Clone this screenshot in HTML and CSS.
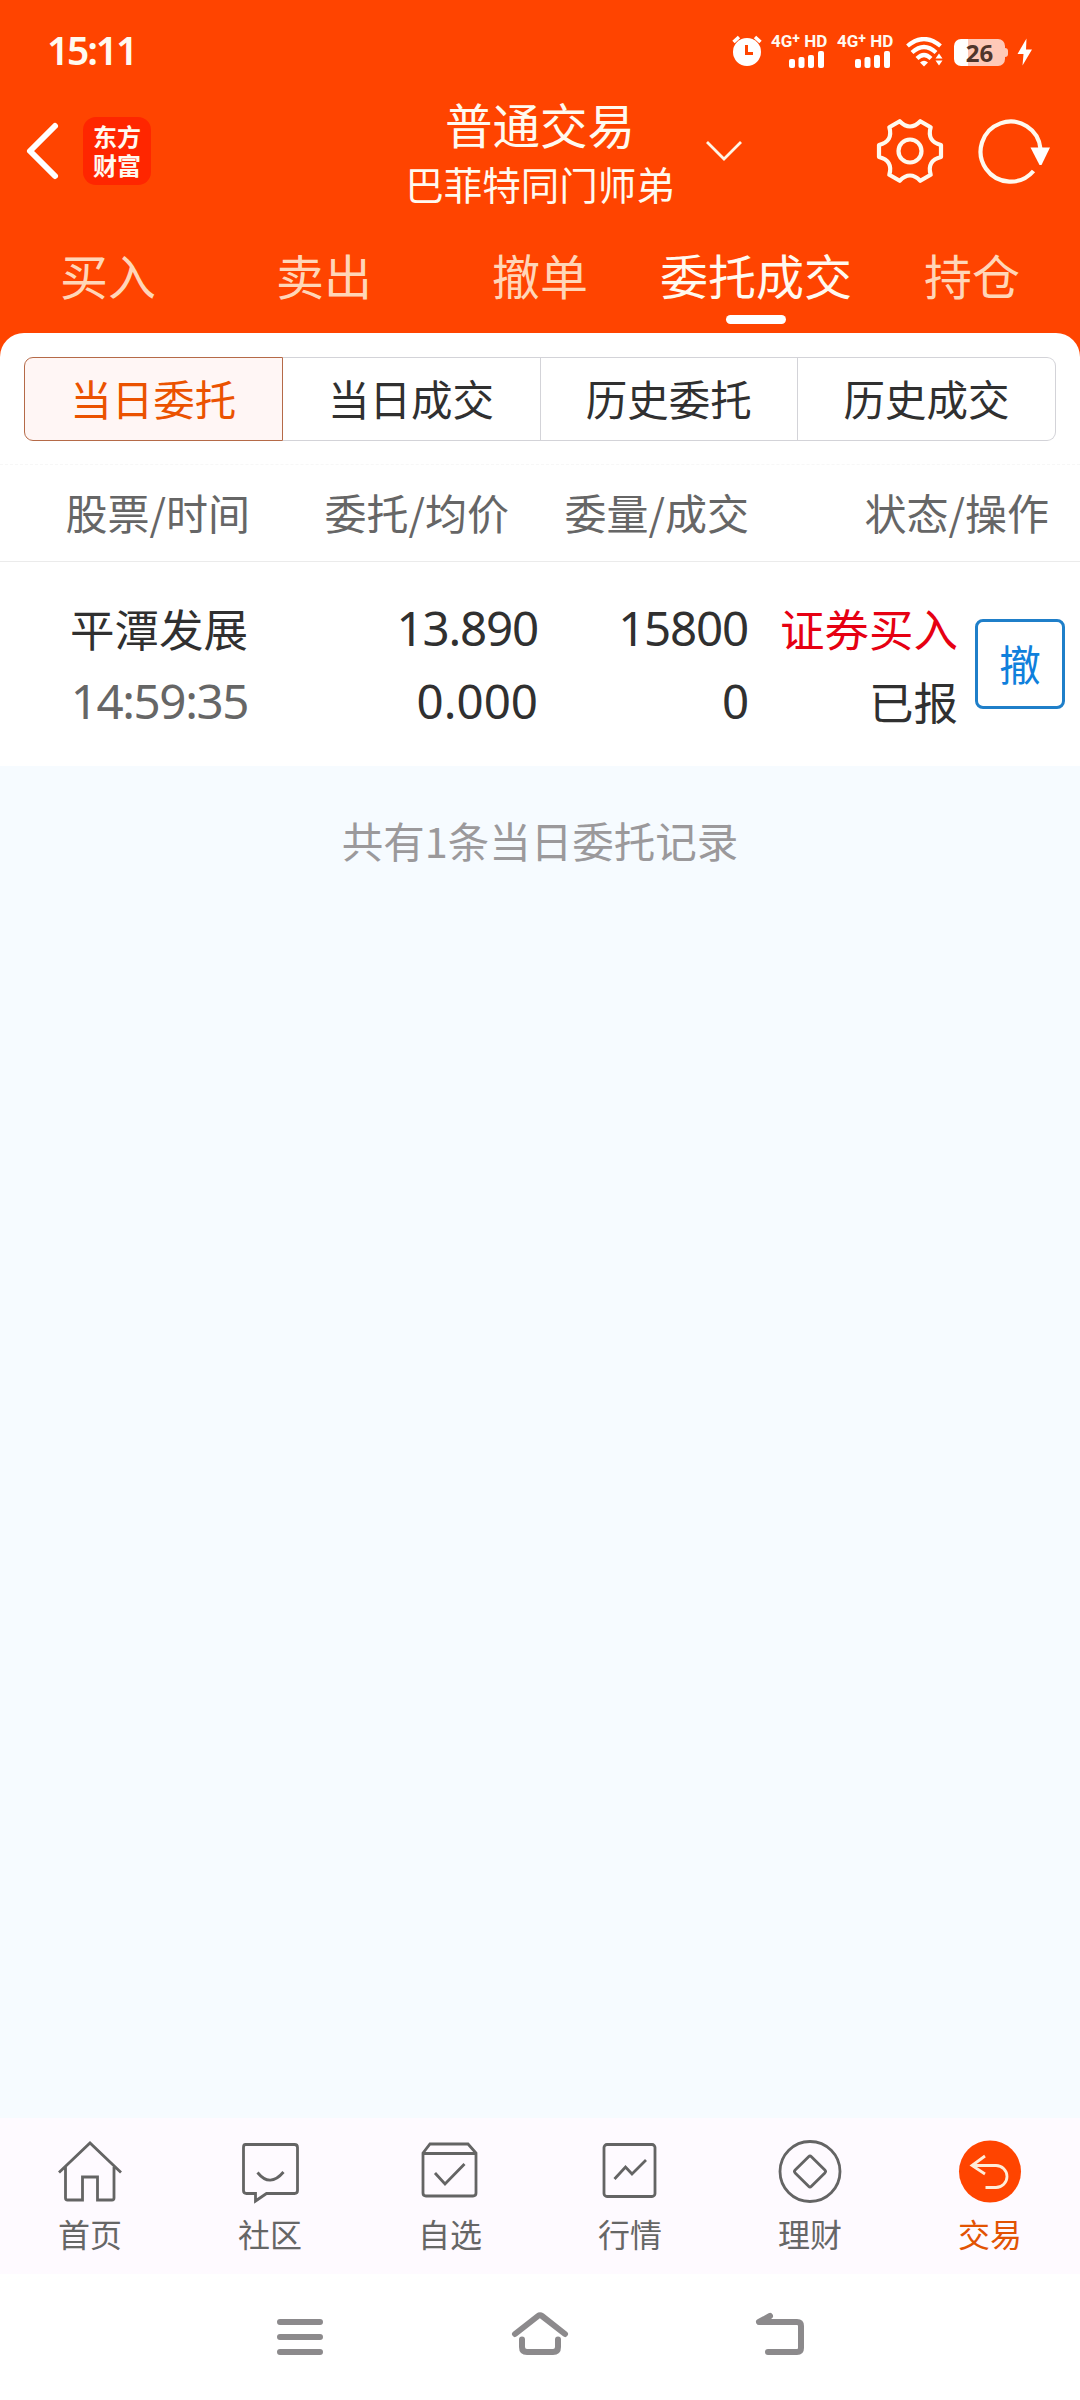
FILE: index.html
```
<!DOCTYPE html>
<html lang="zh-CN">
<head>
    <meta charset="UTF-8">
    <meta name="viewport" content="width=device-width, initial-scale=1.0">
    <title>普通交易</title>
    <link rel="stylesheet" href="styles.css">
</head>
<body>
    <header class="header">
        <div class="status-bar">
            <span class="clock">15:11</span>
            <div class="status-icons">
                <svg class="alarm" width="30" height="32" viewBox="0 0 30 32">
                    <circle cx="15" cy="18" r="14" fill="#fff"/>
                    <path d="M1.500 8L7 3M28.500 8L23 3" stroke="#fff" stroke-width="3.500"/>
                    <path d="M14.500 11V19.500H21" fill="none" stroke="#ff4400" stroke-width="3"/>
                </svg>
                <div class="signal">
                    <span>4G<sup>+</sup> HD</span>
                    <svg width="36" height="18" viewBox="0 0 36 18" fill="#fff">
                        <rect x="0" y="8" width="6" height="9" rx="2"/>
                        <rect x="9.500" y="6" width="6" height="11" rx="2"/>
                        <rect x="19" y="4" width="6" height="13" rx="2"/>
                        <rect x="29" y="0" width="6" height="17" rx="2"/>
                    </svg>
                </div>
                <div class="signal">
                    <span>4G<sup>+</sup> HD</span>
                    <svg width="36" height="18" viewBox="0 0 36 18" fill="#fff">
                        <rect x="0" y="8" width="6" height="9" rx="2"/>
                        <rect x="9.500" y="6" width="6" height="11" rx="2"/>
                        <rect x="19" y="4" width="6" height="13" rx="2"/>
                        <rect x="29" y="0" width="6" height="17" rx="2"/>
                    </svg>
                </div>
                <svg class="wifi" width="37" height="30" viewBox="0 0 37 30">
                    <g fill="none" stroke="#fff" stroke-width="4.200">
                        <path d="M1.500 9Q18 -5 34.500 9"/>
                        <path d="M6 15.500Q18 4.500 30 15.500"/>
                        <path d="M11 21.500Q18 14.500 25 21.500"/>
                    </g>
                    <path d="M14 25.500Q18 22 22 25.500L18 29.500ZM29.500 21.500L33 16.500L36.500 21.500ZM29.500 23.500L33 28.500L36.500 23.500Z" fill="#fff"/>
                </svg>
                <div class="battery">26</div>
                <svg class="bolt" width="16" height="28" viewBox="0 0 16 28">
                    <path d="M9.500 0.500L0.500 16H6.500L5.500 27.500L15 11.500H9Z" fill="#fff"/>
                </svg>
            </div>
        </div>

        <div class="title-bar">
            <div class="title-left">
                <svg width="36" height="60" viewBox="0 0 36 60">
                    <path d="M31 5L6 30L31 55" fill="none" stroke="#fff" stroke-width="6" stroke-linecap="round" stroke-linejoin="round"/>
                </svg>
                <div class="logo">东方<br>财富</div>
            </div>
            <div class="title-text">
                <h1>普通交易</h1>
                <p>巴菲特同门师弟</p>
            </div>
            <div class="title-right">
                <svg class="chevron" width="38" height="22" viewBox="0 0 38 22">
                    <path d="M2 2L19 19L36 2" fill="none" stroke="#fff6e6" stroke-width="2.800"/>
                </svg>
                <svg class="gear" width="68" height="68" viewBox="-34 -34 68 68">
                    <g fill="none" stroke="#fff9ee" stroke-width="4.200" stroke-linejoin="round">
                        <path d="M31 -6V6Q16.600 9.600 20.700 23.800L10.300 29.800Q0 19.200 -10.300 29.800L-20.700 23.800Q-16.600 9.600 -31 6V-6Q-16.600 -9.600 -20.700 -23.800L-10.300 -29.800Q0 -19.200 10.300 -29.800L20.700 -23.800Q16.600 -9.600 31 -6Z"/>
                        <circle r="11.500"/>
                    </g>
                </svg>
                <svg class="refresh" width="72" height="68" viewBox="-33 -34 72 68">
                    <path d="M29.500 -2A30 30 0 1 0 22.500 20" fill="none" stroke="#fff9ee" stroke-width="4.200"/>
                    <path d="M19.500 -3.500H39L30.500 14H28.500Z" fill="#fff"/>
                </svg>
            </div>
        </div>

        <nav class="tabs">
            <a>买入</a>
            <a>卖出</a>
            <a>撤单</a>
            <a class="active">委托成交</a>
            <a>持仓</a>
        </nav>
    </header>

    <main class="panel">
        <div class="segment">
            <button class="active">当日委托</button>
            <button>当日成交</button>
            <button>历史委托</button>
            <button>历史成交</button>
        </div>

        <div class="list-head">
            <span>股票/时间</span>
            <span>委托/均价</span>
            <span>委量/成交</span>
            <span>状态/操作</span>
        </div>

        <div class="order">
            <div class="cell name">
                <div>平潭发展</div>
                <div class="num time">14:59:35</div>
            </div>
            <div class="cell">
                <div class="num">13.890</div>
                <div class="num wide">0.000</div>
            </div>
            <div class="cell">
                <div class="num">15800</div>
                <div class="num">0</div>
            </div>
            <div class="cell">
                <div class="buy">证券买入</div>
                <div>已报</div>
            </div>
            <button class="cancel">撤</button>
        </div>
    </main>

    <p class="total">共有1条当日委托记录</p>

    <nav class="bottom-nav">
        <a>
            <svg width="68" height="68" viewBox="0 0 68 68">
                <path d="M3 31.500L34 2L65 31.500M9.500 26V57Q9.500 59 11.500 59H26.500V36H41.500V59H56Q58 59 58 57V26"/>
            </svg>
            首页
        </a>
        <a>
            <svg width="68" height="68" viewBox="0 0 68 68">
                <path d="M9.500 3.500H58.500Q61.500 3.500 61.500 6.500V49.500Q61.500 52.500 58.500 52.500H30.500L19.500 60V52.500H10.500Q7.500 52.500 7.500 49.500V6.500Q7.500 3.500 9.500 3.500Z"/>
                <path d="M21.500 31.500Q34 47 47.500 31"/>
            </svg>
            社区
        </a>
        <a>
            <svg width="68" height="68" viewBox="0 0 68 68">
                <path d="M7 12L14 3H52L60 12V52Q60 55 57 55H10Q7 55 7 52ZM7 12.500H60M19 32L29 43L48.500 23"/>
            </svg>
            自选
        </a>
        <a>
            <svg width="68" height="68" viewBox="0 0 68 68">
                <rect x="8" y="3.500" width="51" height="52" rx="3"/>
                <path d="M18.500 38L29.500 26L36 33L50 19"/>
            </svg>
            行情
        </a>
        <a>
            <svg width="68" height="68" viewBox="0 0 68 68">
                <circle cx="34" cy="30.500" r="30"/>
                <rect x="22.500" y="19" width="23" height="23" rx="2" transform="rotate(45 34 30.500)"/>
            </svg>
            理财
        </a>
        <a class="active">
            <svg width="68" height="68" viewBox="0 0 68 68">
                <circle class="disc" cx="34" cy="30.500" r="31"/>
                <path class="arrow" d="M29 15L16 24.500L29 33M16 24.500H40A11 11 0 0 1 40 46.500H29.500"/>
            </svg>
            交易
        </a>
    </nav>

    <div class="system-nav">
        <svg width="60" height="48" viewBox="0 0 60 48">
            <path d="M10 12H50M10 27H50M10 42H50"/>
        </svg>
        <svg width="60" height="48" viewBox="0 0 60 48">
            <path d="M5 24L28 6Q30 4.500 32 6L55 24M12 29.500V37Q12 42 17 42H43Q48 42 48 37V29.500"/>
        </svg>
        <svg width="60" height="48" viewBox="0 0 60 48">
            <path d="M20 6L9 12H47Q51 12 51 16V38Q51 42 47 42H18"/>
        </svg>
    </div>
</body>
</html>
```

FILE: styles.css
```
* { box-sizing: border-box; }
body {
    margin: 0;
    width: 1080px;
    height: 2400px;
    display: flex;
    flex-direction: column;
    background-color: #f6fbff;
    color: #303030;
    font-family: "Noto Sans CJK SC", sans-serif;
}
h1, p { margin: 0; font-weight: 400; }
button { font-family: inherit; color: inherit; padding: 0; }
svg { display: block; flex: none; }

/* 顶部 */
.header {
    height: 363px;
    background-color: #ff4400;
    color: #fffaf0;
}
.status-bar {
    height: 90px;
    padding: 0 47px 0 47px;
    display: flex;
    justify-content: space-between;
}
.clock {
    margin-top: 23px;
    font: 600 39px/54px "Noto Sans", sans-serif;
    letter-spacing: -2.200px;
}
.status-icons { display: flex; }
.alarm { margin: 34px 9px 0 0; }
.signal {
    width: 57px;
    height: 40px;
    margin: 34px 9px 0 0;
    display: flex;
    flex-direction: column;
    font: 700 17px/14px "Roboto", sans-serif;
    white-space: nowrap;
}
.signal sup { font-size: 14px; line-height: 0; vertical-align: 4px; }
.signal svg { margin: 3px 0 0 18px; }
.wifi { margin: 37px 11px 0 3px; }
.battery {
    position: relative;
    width: 51px;
    height: 27px;
    margin: 39px 12px 0 0;
    border-radius: 7px;
    background: linear-gradient(to right, #fff 14px, #ffc9b8 14px);
    color: #50352b;
    font: 700 24px/27px "Noto Sans", sans-serif;
    text-align: center;
}
.battery::after {
    content: "";
    position: absolute;
    left: 51px;
    top: 9px;
    width: 3px;
    height: 9px;
    border-radius: 0 3px 3px 0;
    background-color: #ffc9b8;
}
.bolt { margin-top: 38px; }

.title-bar {
    height: 140px;
    display: grid;
    grid-template-columns: 400px 280px 400px;
}
.title-left {
    display: flex;
    padding-left: 24px;
}
.title-left > svg { margin-top: 31px; }
.logo {
    width: 68px;
    height: 68px;
    margin: 27px 0 0 23px;
    padding-top: 4px;
    border-radius: 13px;
    background-color: #ff2600;
    font-weight: 700;
    font-size: 24px;
    line-height: 29px;
    text-align: center;
}
.title-text { text-align: center; white-space: nowrap; }
.title-text h1 { margin-top: 9px; font-size: 47.500px; line-height: 50px; }
.title-text p { margin-top: 12px; font-size: 38.500px; line-height: 44px; }
.title-right { display: flex; }
.chevron { margin: 50px 0 0 25px; }
.gear { margin: 27px 0 0 133px; }
.refresh { margin: 27px 0 0 34px; }

.tabs {
    display: grid;
    grid-template-columns: repeat(5, 1fr);
}
.tabs a {
    height: 94px;
    padding-top: 19px;
    font-size: 48px;
    line-height: 50px;
    text-align: center;
    color: #ffd6b8;
}
.tabs .active { color: #fffaf0; }
.tabs .active::after {
    content: "";
    display: block;
    width: 60px;
    height: 9px;
    margin: 16px auto 0;
    border-radius: 5px;
    background-color: #fff;
}

/* 委托列表 */
.panel {
    height: 433px;
    margin-top: -30px;
    background-color: #fff;
    border-radius: 24px 24px 0 0;
}
.segment {
    height: 132px;
    padding: 24px 24px 23px;
    display: flex;
    border-bottom: 1px dashed #f7f7f7;
}
.segment button {
    flex: 1 1 0;
    border: 1px solid #d3d3d8;
    border-left-width: 0;
    background-color: #fff;
    padding-bottom: 2px;
    font-size: 41.500px;
    line-height: 60px;
}
.segment button:first-child { border-radius: 9px 0 0 9px; }
.segment button:last-child { border-radius: 0 9px 9px 0; }
.segment .active {
    border: 1px solid #b56a48;
    background-color: #fff6f5;
    color: #eb5200;
}

.list-head {
    height: 97px;
    padding-bottom: 2px;
    display: grid;
    grid-template-columns: 250px 259px 240px 300px;
    align-items: center;
    border-bottom: 1px solid #ebebeb;
    color: #666;
    font-size: 42px;
    line-height: 60px;
    text-align: right;
}
.order {
    height: 204px;
    display: grid;
    grid-template-columns: 248px 290px 210px 210px 90px;
    font-size: 44.500px;
    text-align: right;
    white-space: nowrap;
}
.cell { padding-top: 29px; line-height: 73px; }
.cell > div { height: 73px; }
.num {
    font-family: "Noto Sans", sans-serif;
    font-size: 47.500px;
    letter-spacing: -1.200px;
}
.num.wide { letter-spacing: 0; }
.time {
    color: #666;
    letter-spacing: -1.400px;
}
.buy { color: #e60012; }
.cancel {
    width: 90px;
    height: 90px;
    margin: 57px 0 0 17px;
    padding-bottom: 2px;
    border: 3px solid #1f7fc9;
    border-radius: 8px;
    background-color: #fff;
    color: #0f80dc;
    font-size: 41.500px;
    line-height: 60px;
}
.total {
    margin-top: 44px;
    color: #9b999b;
    font-size: 41.500px;
    line-height: 60px;
    text-align: center;
}

/* 底部导航 */
.bottom-nav {
    height: 156px;
    margin-top: auto;
    padding-top: 23px;
    display: grid;
    grid-template-columns: repeat(6, 1fr);
    background-color: #fefaff;
}
.bottom-nav a {
    display: flex;
    flex-direction: column;
    align-items: center;
    color: #666;
    font-size: 32px;
    line-height: 48px;
}
.bottom-nav svg {
    fill: none;
    stroke: #646464;
    stroke-width: 2.800;
    overflow: visible;
}
.bottom-nav .active { color: #e25303; }
.bottom-nav .disc { fill: #ff4400; stroke: none; }
.bottom-nav .arrow { stroke: #ffedd8; }

.system-nav {
    height: 126px;
    padding: 36px 270px 0;
    display: flex;
    justify-content: space-between;
    background-color: #fff;
}
.system-nav svg {
    fill: none;
    stroke: #8c8a8c;
    stroke-width: 6;
    stroke-linecap: round;
    stroke-linejoin: round;
}
```
